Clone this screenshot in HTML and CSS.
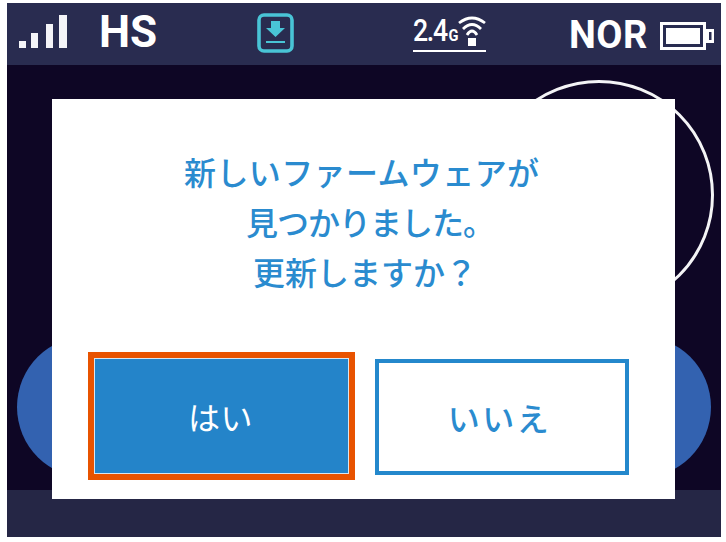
FILE: index.html
```html
<!DOCTYPE html>
<html lang="ja">
<head>
<meta charset="utf-8">
<title>ファームウェア更新</title>
<link rel="stylesheet" href="styles.css">
</head>
<body>
<main class="screen">
  <header class="status">
    <svg class="signal" width="48" height="33" viewBox="0 0 48 33" aria-hidden="true">
      <rect x="0" y="26" width="7" height="7"/>
      <rect x="12" y="18" width="7" height="15"/>
      <rect x="27" y="9" width="7" height="24"/>
      <rect x="40" y="0" width="8" height="33"/>
    </svg>
    <span class="mode">HS</span>
    <svg class="download" width="37" height="40" viewBox="0 0 37 40" aria-hidden="true">
      <rect x="2" y="2" width="33" height="36" rx="5" fill="none" stroke="#49c4d6" stroke-width="3.600"/>
      <path d="M14 8h9v7h5l-9.500 9-9.500-9h5z" fill="#49c4d6"/>
      <rect x="9" y="28" width="19" height="2" fill="#49c4d6"/>
    </svg>
    <div class="band">
      <span class="band-label">2.4<small>G</small></span>
      <svg class="wifi" width="28" height="31" viewBox="0 0 28 31" aria-hidden="true">
        <path d="M1 7Q14 -3 27 7M5 13Q14 4 23 13M9 19Q14 11 19 19" fill="none" stroke="#fff" stroke-width="2.800"/>
        <rect x="10" y="22" width="8" height="8" fill="#fff"/>
      </svg>
    </div>
    <span class="power">NOR</span>
    <svg class="battery" width="55" height="28" viewBox="0 0 55 28" aria-hidden="true">
      <rect x="1.500" y="1.500" width="43" height="25" fill="none" stroke="#fff" stroke-width="3"/>
      <rect x="5" y="5" width="36" height="18" fill="none" stroke="#292c50" stroke-width="1"/>
      <rect x="6" y="6" width="34" height="16" fill="#fff"/>
      <path d="M46 7h8v14h-8z" fill="#fff"/>
      <rect x="49" y="10" width="2.500" height="8" fill="#292c50"/>
    </svg>
  </header>
  <div class="stage">
    <div class="pill"></div>
    <div class="ring"></div>
  </div>
  <footer class="bottom"></footer>
  <section class="dialog" role="dialog">
    <p class="message">
      <span class="line line-1">新しいファームウェアが</span>
      <span class="line line-2">見つかりました。</span>
      <span class="line line-3">更新しますか&#xFF1F;</span>
    </p>
    <div class="actions">
      <button class="btn btn-yes" type="button">はい</button>
      <button class="btn btn-no" type="button">いいえ</button>
    </div>
  </section>
</main>
</body>
</html>
```
FILE: styles.css
```css
html, body {
  margin: 0;
  padding: 0;
  background: #fff;
}
body {
  width: 726px;
  height: 542px;
  overflow: hidden;
  font-family: "Noto Sans CJK JP", "Noto Sans", sans-serif;
}
.screen {
  position: relative;
  display: grid;
  grid-template-rows: 62px 1fr 47px;
  width: 714px;
  height: 534px;
  margin: 3px 0 0 7px;
  background: #0e0625;
  overflow: hidden;
}
.status {
  display: flex;
  align-items: flex-start;
  background: #292c50;
  color: #fff;
}
.signal { margin: 12px 0 0 12px; fill: #f4f4f8; flex: none; }
.mode {
  margin: 3px 0 0 32px;
  width: 60px;
  font: 700 44px/52px Roboto, sans-serif;
}
.download { margin: 10px 0 0 98px; flex: none; }
.band {
  display: flex;
  align-items: flex-end;
  margin: 12px 0 0 119px;
  width: 73px;
  height: 35px;
  border-bottom: 2px solid #fff;
}
.band-label {
  font: 500 31px/30px Roboto, sans-serif;
  flex: none;
  width: 45px;
  white-space: nowrap;
  letter-spacing: -1.5px;
  transform: scaleX(.86);
  transform-origin: left;
}
.band-label small { font-size: 17px; font-weight: 700; letter-spacing: 0; margin-left: 2px; }
.wifi { margin-bottom: 3px; flex: none; }
.power {
  margin: 8px 0 0 83px;
  width: 84px;
  font: 700 38px/48px Roboto, sans-serif;
  letter-spacing: .5px;
}
.battery { margin: 19px 0 0 7px; flex: none; }
.stage { position: relative; }
.pill {
  position: absolute;
  left: 10px;
  top: 271px;
  width: 694px;
  height: 142px;
  border-radius: 71px;
  background: #3362b0;
}
.ring {
  position: absolute;
  left: 477px;
  top: 15px;
  width: 230px;
  height: 230px;
  box-sizing: border-box;
  border: 3px solid #f4f4f6;
  border-radius: 50%;
}
.bottom { background: #252645; }
.dialog {
  position: absolute;
  left: 45px;
  top: 96px;
  width: 623px;
  height: 400px;
  box-sizing: border-box;
  padding: 47px 46px 19px 36px;
  display: flex;
  flex-direction: column;
  justify-content: space-between;
  background: #fff;
}
.message {
  margin: 0;
  font-size: 32px;
  font-weight: 500;
  line-height: 50px;
  color: #2a8bcf;
}
.line { display: block; white-space: nowrap; }
.line-1 { margin-left: 96px; letter-spacing: .4px; }
.line-2 { margin-left: 158px; letter-spacing: -1px; }
.line-3 { margin-left: 165px; }
.actions {
  display: flex;
  align-items: center;
  justify-content: space-between;
}
.btn {
  margin: 0;
  padding: 0;
  font: 400 32px/1 "Noto Sans CJK JP", sans-serif;
  box-sizing: border-box;
  border-radius: 0;
}
.btn-yes {
  width: 267px;
  height: 128px;
  border: 6px solid #e85300;
  outline: 1px solid #d8e6f0;
  outline-offset: -7px;
  background: #2484c9;
  color: #fff;
  padding-right: 2px;
  letter-spacing: .5px;
}
.btn-no {
  width: 254px;
  height: 116px;
  margin-top: 2px;
  padding-right: 5px;
  border: 4px solid #2488cc;
  background: #fff;
  color: #2a8bcf;
  font-weight: 500;
  letter-spacing: 2.5px;
}
```
